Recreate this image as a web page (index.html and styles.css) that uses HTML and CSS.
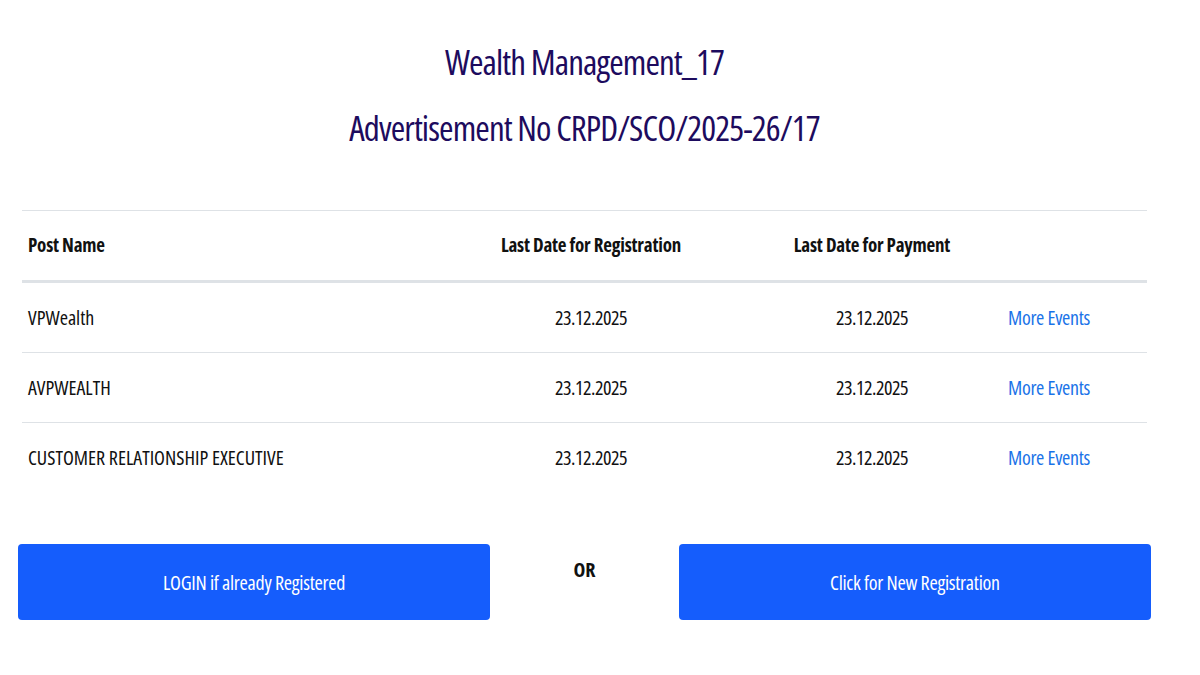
FILE: index.html
```html
<!DOCTYPE html>
<html>
<head>
    <title>Wealth Management_17</title>
    <meta charset="utf-8">
    <link rel="stylesheet" href="styles.css">
</head>
<body>
    <div class="container">
        <h1 class="title">
            <span>Wealth Management_17</span>
            <span>Advertisement No CRPD/SCO/2025-26/17</span>
        </h1>

        <table class="posts">
            <thead>
                <tr>
                    <th class="col-name">Post Name</th>
                    <th class="col-date">Last Date for Registration</th>
                    <th class="col-pay">Last Date for Payment</th>
                    <th class="col-more"></th>
                </tr>
            </thead>
            <tbody>
                <tr>
                    <td>VPWealth</td>
                    <td class="center">23.12.2025</td>
                    <td class="center">23.12.2025</td>
                    <td><a href="#" class="more">More Events</a></td>
                </tr>
                <tr>
                    <td>AVPWEALTH</td>
                    <td class="center">23.12.2025</td>
                    <td class="center">23.12.2025</td>
                    <td><a href="#" class="more">More Events</a></td>
                </tr>
                <tr>
                    <td>CUSTOMER RELATIONSHIP EXECUTIVE</td>
                    <td class="center">23.12.2025</td>
                    <td class="center">23.12.2025</td>
                    <td><a href="#" class="more">More Events</a></td>
                </tr>
            </tbody>
        </table>

        <div class="actions">
            <button class="btn">LOGIN if already Registered</button>
            <div class="or">OR</div>
            <button class="btn">Click for New Registration</button>
        </div>
    </div>
</body>
</html>
```
FILE: styles.css
```css
body {
    margin: 0;
    background-color: #fff;
    font-family: "Open Sans", sans-serif;
    font-stretch: 75%;
    color: #111;
}
.container {
    width: 1133px;
    margin-left: 18px;
}
.title {
    margin: 29px 0 0 0;
    text-align: center;
    font-weight: 400;
    font-size: 35px;
    letter-spacing: -0.9px;
    line-height: 66px;
    color: #1d0b5e;
}
.title span {
    display: block;
}
.posts {
    width: 1125px;
    margin: 49px 4px 0 4px;
    border-collapse: collapse;
    font-size: 20px;
}
.posts th,
.posts td {
    padding: 22px 6px;
    line-height: 25px;
    text-align: left;
}
.posts thead th {
    border-top: 1px solid #dee2e6;
    border-bottom: 3px solid #dee2e6;
    font-weight: 700;
    font-size: 19px;
    letter-spacing: -0.2px;
    color: #111;
}
.posts tbody tr + tr td {
    border-top: 1px solid #dee2e6;
}
.posts .col-name { width: 406px; }
.posts .col-date { width: 290px; text-align: center; }
.posts .col-pay { width: 248px; text-align: center; }
.posts td.center {
    text-align: center;
    letter-spacing: -0.5px;
}
.more {
    color: #1a73e8;
    text-decoration: none;
    letter-spacing: -0.3px;
}
.actions {
    display: grid;
    grid-template-columns: 5fr 2fr 5fr;
    margin-top: 52px;
}
.btn {
    height: 76px;
    border: none;
    border-radius: 4px;
    background-color: #155dfc;
    color: #fff;
    font-family: "Open Sans", sans-serif;
    font-stretch: 75%;
    font-size: 20px;
    letter-spacing: -0.25px;
    cursor: pointer;
}
.or {
    padding-top: 14px;
    text-align: center;
    font-weight: 700;
    font-size: 20px;
    line-height: 24px;
}
```
